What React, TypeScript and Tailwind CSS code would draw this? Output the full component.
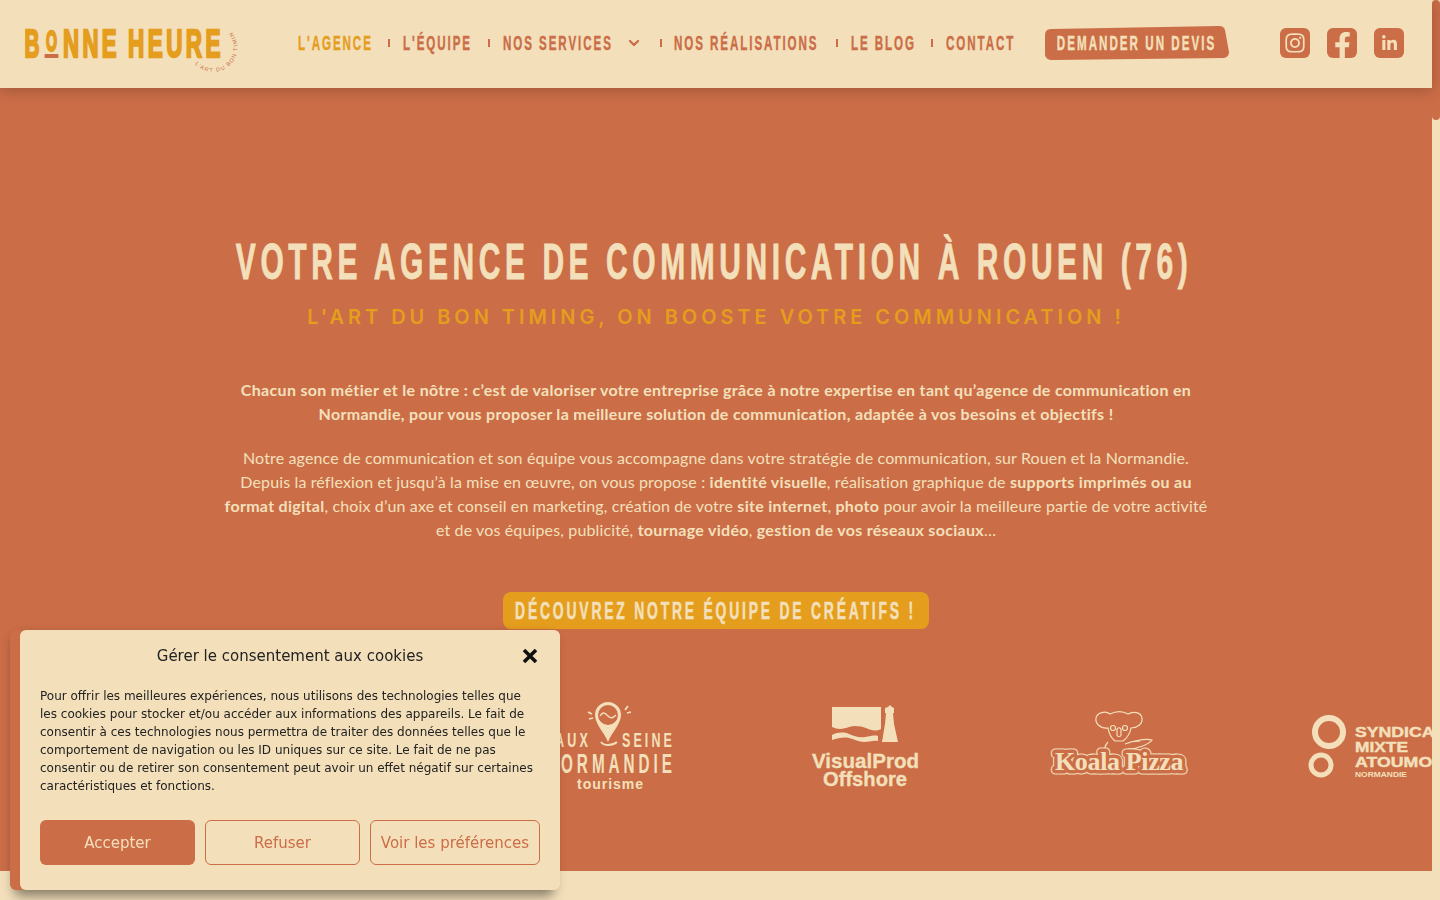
import { ChevronDown } from "lucide-react";
import { FaFacebookF, FaInstagram, FaLinkedinIn } from "react-icons/fa";

const display = "font-['Liberation_Sans',sans-serif] font-bold";

function Logo() {
  return (
    <svg width="220" height="60" viewBox="23 14 220 60" className="shrink-0" aria-label="Bonne Heure">
      <g fontFamily="Liberation Sans, sans-serif" fontWeight="700" fill="#e59d1d" stroke="#e59d1d" strokeWidth="2.4">
        <text x="24.5" y="58" fontSize="39" textLength="15" lengthAdjust="spacingAndGlyphs">B</text>
        <text x="46" y="51.5" fontSize="30" textLength="11" lengthAdjust="spacingAndGlyphs">O</text>
        <text x="63" y="58" fontSize="39" letterSpacing="6" textLength="57" lengthAdjust="spacingAndGlyphs">NNE</text>
        <text x="128" y="58" fontSize="39" letterSpacing="6" textLength="96" lengthAdjust="spacingAndGlyphs">HEURE</text>
      </g>
      <rect x="44.5" y="55" width="14" height="4" rx="1" fill="#cb6d47" />
      <path id="logo-arc" d="M195 65 A24 24 0 1 0 231 32" fill="none" />
      <text fontSize="5.5" fontFamily="Liberation Sans, sans-serif" fill="#cb6d47" letterSpacing="1.2">
        <textPath href="#logo-arc">L’ART DU BON TIMING</textPath>
      </text>
    </svg>
  );
}

function NavItem({ label, width, active }: { label: string; width: string; active?: boolean }) {
  return (
    <a className={`${width} block whitespace-nowrap ${active ? "text-[#e59d1d]" : "text-[#cb6d47]"}`}>
      <span className={`${display} inline-block origin-left scale-x-[0.58] text-[20px] leading-6 tracking-[3.3px] [-webkit-text-stroke:0.4px_currentColor]`}>{label}</span>
    </a>
  );
}

function Sep() {
  return <span className="block h-2 w-0.5 bg-[#cb6d47]" />;
}

function SocialIcon({ children }: { children: React.ReactNode }) {
  return (
    <a className="flex h-[30px] w-[30px] items-center justify-center overflow-hidden rounded-md bg-[#cb6d47] text-[#f3e0bb]">
      {children}
    </a>
  );
}

function TourismeLogo() {
  return (
    <svg viewBox="483 695 254 100" className="h-[100px] w-[254px] shrink-0 overflow-visible">
      <g fill="#f3e0bb" fontFamily="Liberation Sans, sans-serif" fontWeight="700">
        <path fillRule="evenodd" d="M608 702a13 13 0 0 1 13 13c0 9-9 17-13 27c-4-10-13-18-13-27a13 13 0 0 1 13-13zm0 3a10 10 0 1 0 0 20a10 10 0 1 0 0-20z" />
        <path d="M600 716c3-5 5-3 8 0s5 2 8-1" fill="none" stroke="#f3e0bb" strokeWidth="1.4" />
        <path d="M588 712l4 2M589 719l4-1M628 706l-3 4M631 712l-4 1" stroke="#f3e0bb" strokeWidth="1.8" fill="none" />
        <path d="M601 742c3 4 11 4 16 0" stroke="#f3e0bb" strokeWidth="2" fill="none" />
        <text x="555" y="747" fontSize="20" letterSpacing="5" textLength="36" lengthAdjust="spacingAndGlyphs">AUX</text>
        <text x="622" y="747" fontSize="20" letterSpacing="5" textLength="53" lengthAdjust="spacingAndGlyphs">SEINE</text>
        <text x="546" y="773" fontSize="27" letterSpacing="7" textLength="130" lengthAdjust="spacingAndGlyphs">NORMANDIE</text>
        <text x="577" y="789" fontSize="15" letterSpacing="1" textLength="67" lengthAdjust="spacingAndGlyphs">tourisme</text>
      </g>
    </svg>
  );
}

function VisualProdLogo() {
  return (
    <svg viewBox="737 695 254 100" className="h-[100px] w-[254px] shrink-0">
      <g fill="#f3e0bb" fontFamily="Liberation Sans, sans-serif" fontWeight="700">
        <path d="M832 707h49v22c-6 3-10 1-15-1s-12-3-17-1s-11 3-17 0z" />
        <path d="M832 735c6-3 12-3 17-1s10 4 16 3s10-2 13-1v5c-5-1-9 1-14 1s-10-3-15-4s-11 0-17 2z" />
        <path d="M888 707l2-2l2 2l2 1v5h-1l1 11l4 18h-16l3-18l1-11h-1v-5z" />
        <g stroke="#f3e0bb" strokeWidth="0.3">
          <text x="812" y="768" fontSize="21" textLength="107" lengthAdjust="spacingAndGlyphs">VisualProd</text>
          <text x="823" y="786" fontSize="21" textLength="84" lengthAdjust="spacingAndGlyphs">Offshore</text>
        </g>
      </g>
    </svg>
  );
}

function KoalaLogo() {
  return (
    <svg viewBox="991 695 254 100" className="h-[100px] w-[254px] shrink-0">
      <g fill="none" stroke="#f3e0bb" strokeWidth="1.2">
        <path d="M1108 728c-8 1-13-5-12-10s9-8 14-4c6-3 13-3 18 0c5-3 13-2 14 4s-5 10-11 10c-1 6-4 10-8 13h-8c-4-3-6-7-7-13z" />
        <circle cx="1113" cy="728" r="2.5" />
        <circle cx="1125" cy="728" r="2.5" />
        <path d="M1117 730c0-3 4-3 4 0v5c0 2-4 2-4 0z" />
        <path d="M1125 744c6-2 20-6 27-4c-3 4-14 9-24 9M1108 742c-2 2-3 4-3 6M1130 742l10-1" />
      </g>
      <text x="1055" y="770" fontFamily="Liberation Serif, serif" fontWeight="700" fontSize="26" letterSpacing="2.5" textLength="131" lengthAdjust="spacing" fill="#cb6d47" stroke="#f3e0bb" strokeWidth="9" strokeLinejoin="round">Koala Pizza</text>
      <text x="1055" y="770" fontFamily="Liberation Serif, serif" fontWeight="700" fontSize="26" letterSpacing="2.5" textLength="131" lengthAdjust="spacing" fill="#cb6d47" stroke="#cb6d47" strokeWidth="6.8" strokeLinejoin="round">Koala Pizza</text>
      <text x="1055" y="770" fontFamily="Liberation Serif, serif" fontWeight="700" fontSize="26" letterSpacing="2.5" textLength="131" lengthAdjust="spacing" fill="#f3e0bb">Koala Pizza</text>
    </svg>
  );
}

function SyndicatLogo() {
  return (
    <svg viewBox="1245 695 254 100" className="h-[100px] w-[254px] shrink-0">
      <circle cx="1329" cy="732" r="14" fill="none" stroke="#f3e0bb" strokeWidth="6" />
      <circle cx="1321" cy="765" r="10" fill="none" stroke="#f3e0bb" strokeWidth="5" />
      <g fill="#f3e0bb" stroke="#f3e0bb" strokeWidth="0.4" fontFamily="Liberation Sans, sans-serif" fontWeight="700">
        <text x="1355" y="737" fontSize="14" textLength="89" lengthAdjust="spacingAndGlyphs">SYNDICAT</text>
        <text x="1355" y="752" fontSize="14" textLength="53" lengthAdjust="spacingAndGlyphs">MIXTE</text>
        <text x="1355" y="767" fontSize="14" textLength="90" lengthAdjust="spacingAndGlyphs">ATOUMOD</text>
        <text x="1355" y="777" fontSize="7" textLength="52" lengthAdjust="spacingAndGlyphs" strokeWidth="0">NORMANDIE</text>
      </g>
    </svg>
  );
}

function CookieBanner() {
  return (
    <div className="fixed bottom-[10px] left-5 z-20 h-[260px] w-[540px] rounded-md bg-[#f3e0bb] p-5 font-['DejaVu_Sans',sans-serif] shadow-[-10px_0_0_#cb6d47,-6px_6px_12px_rgba(0,0,0,0.45)]">
      <div className="relative flex h-[10px] items-center justify-center">
        <h2 className="mt-0.5 text-[15px] leading-6 text-[#222]">Gérer le consentement aux cookies</h2>
        <svg viewBox="0 0 16 16" className="absolute -top-0.5 right-0.5 h-[16px] w-[16px]">
          <path d="M2 2 L14 14 M14 2 L2 14" stroke="#111" strokeWidth="3.6" />
        </svg>
      </div>
      <p className="mt-[27px] whitespace-nowrap text-[12px] leading-[18px] text-[#222]">
        Pour offrir les meilleures expériences, nous utilisons des technologies telles que
        <br />
        les cookies pour stocker et/ou accéder aux informations des appareils. Le fait de
        <br />
        consentir à ces technologies nous permettra de traiter des données telles que le
        <br />
        comportement de navigation ou les ID uniques sur ce site. Le fait de ne pas
        <br />
        consentir ou de retirer son consentement peut avoir un effet négatif sur certaines
        <br />
        caractéristiques et fonctions.
      </p>
      <div className="mt-[25px] flex gap-2.5 text-[15px]">
        <button className="h-[45px] w-[155px] rounded-md bg-[#cb6d47] pt-0.5 text-[#f3e0bb]">Accepter</button>
        <button className="h-[45px] w-[155px] rounded-md border border-[#cb6d47] pt-0.5 text-[#cb6d47]">Refuser</button>
        <button className="h-[45px] w-[170px] whitespace-nowrap rounded-md border border-[#cb6d47] pt-0.5 text-[#cb6d47]">Voir les préférences</button>
      </div>
    </div>
  );
}

function B({ children }: { children: React.ReactNode }) {
  return <b className="tracking-[0.3px]">{children}</b>;
}

export default function App() {
  return (
    <div className="flex h-screen overflow-hidden bg-[#f3e0bb]">
      <div className="min-w-0 flex-1">
        <header className="relative z-10 flex h-[88px] items-center bg-[#f3e0bb] pb-0.5 pl-[23px] shadow-[0_2px_14px_rgba(0,0,0,0.22)]">
          <Logo />
          <nav className="ml-[55px] flex items-center">
            <NavItem label="L'AGENCE" width="w-[90px]" active />
            <Sep />
            <div className="ml-[13px]"><NavItem label="L'ÉQUIPE" width="w-[85px]" /></div>
            <Sep />
            <div className="ml-[13px] flex w-[157px] items-center">
              <NavItem label="NOS SERVICES" width="w-[123px]" />
              <ChevronDown className="h-4 w-4 text-[#cb6d47]" strokeWidth={3.5} />
            </div>
            <Sep />
            <div className="ml-3"><NavItem label="NOS RÉALISATIONS" width="w-[162px]" /></div>
            <Sep />
            <div className="ml-[13px]"><NavItem label="LE BLOG" width="w-[80px]" /></div>
            <Sep />
            <div className="ml-[13px]"><NavItem label="CONTACT" width="w-[68px]" /></div>
          </nav>
          <a className="relative ml-[31px] flex h-[34px] w-[184px] items-center justify-center whitespace-nowrap text-[#f3e0bb]">
            <svg viewBox="0 0 184 34" className="absolute inset-0 h-full w-full">
              <path d="M6 3 L174 0 Q179 0 180 4 L184 26 Q184 31 179 32 L7 34 Q1 34 0 29 L0 9 Q0 3 6 3 Z" fill="#cb6d47" />
            </svg>
            <span className={`${display} relative inline-block scale-x-[0.58] text-[20px] leading-6 tracking-[3.5px] [-webkit-text-stroke:0.4px_currentColor]`}>DEMANDER UN DEVIS</span>
          </a>
          <div className="ml-[51px] flex gap-[17px]">
            <SocialIcon><FaInstagram className="h-[22px] w-[22px]" /></SocialIcon>
            <SocialIcon><FaFacebookF className="mt-[5px] h-[27px] w-[27px]" /></SocialIcon>
            <SocialIcon><FaLinkedinIn className="h-[17px] w-[17px]" /></SocialIcon>
          </div>
        </header>

        <main className="overflow-hidden bg-[#cb6d47] pb-[76px] pt-36 text-center text-[#f3e0bb]">
          <div className="flex justify-center whitespace-nowrap">
            <h1 className={`${display} -ml-1 scale-x-[0.6] text-[50px] leading-[60px] tracking-[7.6px] [-webkit-text-stroke:0.8px_#f3e0bb]`}>VOTRE AGENCE DE COMMUNICATION À ROUEN (76)</h1>
          </div>
          <p className="mt-2.5 whitespace-nowrap font-['Inter',sans-serif] text-[20px] font-semibold leading-[30px] tracking-[3.95px] text-[#e59d1d]">
            L'ART DU BON TIMING, ON BOOSTE VOTRE COMMUNICATION !
          </p>
          <div className="mt-[46px] whitespace-nowrap font-['Lato',sans-serif] text-[16px] leading-6 tracking-[0.14px]">
            <p className="font-bold tracking-[0.32px]">
              Chacun son métier et le nôtre : c’est de valoriser votre entreprise grâce à notre expertise en tant qu’agence de communication en
              <br />
              Normandie, pour vous proposer la meilleure solution de communication, adaptée à vos besoins et objectifs !
            </p>
            <p className="mt-5">
              Notre agence de communication et son équipe vous accompagne dans votre stratégie de communication, sur Rouen et la Normandie.
              <br />
              Depuis la réflexion et jusqu’à la mise en œuvre, on vous propose : <B>identité visuelle</B>, réalisation graphique de <B>supports imprimés ou au</B>
              <br />
              <B>format digital</B>, choix d’un axe et conseil en marketing, création de votre <B>site internet</B>, <B>photo</B> pour avoir la meilleure partie de votre activité
              <br />
              et de vos équipes, publicité, <B>tournage vidéo</B>, <B>gestion de vos réseaux sociaux</B>…
            </p>
          </div>
          <div className="mt-[50px] flex justify-center">
            <a className="flex h-[37px] w-[426px] items-center justify-center whitespace-nowrap rounded-lg bg-[#e59d1d]">
              <span className={`${display} inline-block scale-x-[0.58] text-[24px] tracking-[4.8px] [-webkit-text-stroke:0.5px_currentColor]`}>DÉCOUVREZ NOTRE ÉQUIPE DE CRÉATIFS !</span>
            </a>
          </div>
          <div className="mt-[66px] flex h-[100px] pl-[483px]">
            <TourismeLogo />
            <VisualProdLogo />
            <KoalaLogo />
            <SyndicatLogo />
          </div>
        </main>
      </div>

      <div className="w-2 shrink-0">
        <div className="h-[120px] rounded-sm bg-[#cb6d47]" />
      </div>

      <CookieBanner />
    </div>
  );
}
